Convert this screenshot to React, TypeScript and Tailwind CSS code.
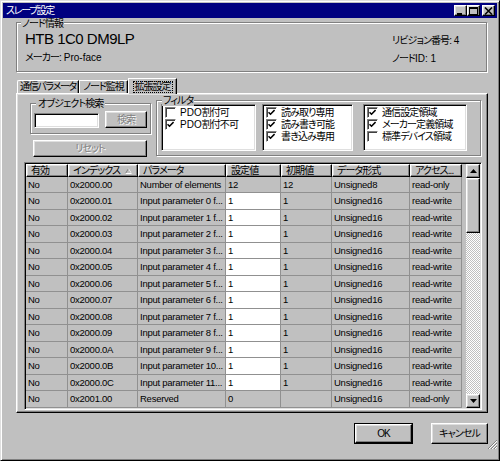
import React from "react";

const FONT = "[font-family:'Liberation_Sans','Noto_Sans_CJK_JP',sans-serif] [font-feature-settings:'palt']";
const JP = "tracking-[-0.9px]";
const RAISED =
  "border border-t-white border-l-white border-r-black border-b-black shadow-[inset_-1px_-1px_0_#808080,inset_1px_1px_0_#dfdfdf]";
const SUNKEN =
  "border border-t-[#808080] border-l-[#808080] border-r-white border-b-white shadow-[inset_1px_1px_0_#000,inset_-1px_-1px_0_#dfdfdf]";
const ETCHED = "border border-[#808080] shadow-[1px_1px_0_#fff,inset_1px_1px_0_#fff]";

function Check({ checked }: { checked: boolean }) {
  return (
    <span className="w-[11px] h-[11px] shrink-0 bg-white border border-t-[#808080] border-l-[#808080] border-r-white border-b-white shadow-[inset_1px_1px_0_#404040] flex items-center justify-center">
      {checked && (
        <svg width="7" height="7" viewBox="0 0 7 7">
          <path d="M0.5 3.2 L2.5 5.2 L6.6 1" fill="none" stroke="#000" strokeWidth="1.6" />
        </svg>
      )}
    </span>
  );
}

function FilterBox({ items, w }: { items: [string, string, boolean][]; w: string }) {
  return (
    <div className={`${SUNKEN} bg-white h-[47px] ${w} flex flex-col pt-[1px] pl-[3px] overflow-hidden`}>
      {items.map(([lat, jp, c]) => (
        <div key={lat + jp} className="flex items-center gap-[4px] h-[12px] text-[10px] leading-[11px] whitespace-nowrap">
          <Check checked={c} />
          <span>
            {lat && <span>{lat}</span>}
            <span className={JP}>{jp}</span>
          </span>
        </div>
      ))}
    </div>
  );
}

const COLS = [42, 70, 88, 55, 51, 78, 52];

type Row = [string, string, string, string, string, string, string, boolean];
const ROWS: Row[] = [
  ["No", "0x2000.00", "Number of elements", "12", "12", "Unsigned8", "read-only", false],
  ["No", "0x2000.01", "Input parameter 0 f...", "1", "1", "Unsigned16", "read-write", true],
  ["No", "0x2000.02", "Input parameter 1 f...", "1", "1", "Unsigned16", "read-write", true],
  ["No", "0x2000.03", "Input parameter 2 f...", "1", "1", "Unsigned16", "read-write", true],
  ["No", "0x2000.04", "Input parameter 3 f...", "1", "1", "Unsigned16", "read-write", true],
  ["No", "0x2000.05", "Input parameter 4 f...", "1", "1", "Unsigned16", "read-write", true],
  ["No", "0x2000.06", "Input parameter 5 f...", "1", "1", "Unsigned16", "read-write", true],
  ["No", "0x2000.07", "Input parameter 6 f...", "1", "1", "Unsigned16", "read-write", true],
  ["No", "0x2000.08", "Input parameter 7 f...", "1", "1", "Unsigned16", "read-write", true],
  ["No", "0x2000.09", "Input parameter 8 f...", "1", "1", "Unsigned16", "read-write", true],
  ["No", "0x2000.0A", "Input parameter 9 f...", "1", "1", "Unsigned16", "read-write", true],
  ["No", "0x2000.0B", "Input parameter 10...", "1", "1", "Unsigned16", "read-write", true],
  ["No", "0x2000.0C", "Input parameter 11...", "1", "1", "Unsigned16", "read-write", true],
  ["No", "0x2001.00", "Reserved", "0", "", "Unsigned16", "read-only", false],
];

const HEADERS = ["有効", "インデックス", "パラメータ", "設定値", "初期値", "データ形式", "アクセス..."];

function ArrowBtn({ up }: { up: boolean }) {
  return (
    <div className={`${RAISED} bg-[#c0c0c0] w-[14px] h-[14px] flex items-center justify-center`}>
      <svg width="7" height="4" viewBox="0 0 7 4">
        {up ? <path d="M3.5 0 L7 4 L0 4 Z" fill="#000" /> : <path d="M0 0 L7 0 L3.5 4 Z" fill="#000" />}
      </svg>
    </div>
  );
}

function Table() {
  return (
    <div className={`${SUNKEN} ml-[6px] mt-[5px] w-[458px] h-[248px] bg-[#c0c0c0] flex p-[1px]`}>
      <div className="flex flex-col w-[440px]">
        <div className="flex h-[13px]">
          {HEADERS.map((h, i) => (
            <div
              key={h}
              style={{ width: COLS[i] }}
              className={`${RAISED} bg-[#c0c0c0] h-[13px] text-[10px] leading-[11px] pl-[4px] flex items-center justify-between pr-[5px] whitespace-nowrap overflow-hidden ${JP}`}
            >
              <span>{h}</span>
              {i === 1 && (
                <svg width="7" height="6" viewBox="0 0 7 6">
                  <path d="M3.5 0.5 L6.5 5.5 L0.5 5.5 Z" fill="none" stroke="#808080" strokeWidth="1" />
                  <path d="M0.5 5.5 L6.5 5.5 L3.5 0.5" fill="none" stroke="#fff" strokeWidth="1" />
                </svg>
              )}
            </div>
          ))}
        </div>
        {ROWS.map((r, ri) => (
          <div key={ri} className={`flex ${ri % 2 === 0 ? "h-[16px]" : "h-[17px]"}`}>
            {COLS.map((w, ci) => (
              <div
                key={ci}
                style={{ width: w }}
                className={`h-full border-r border-b border-[#909090] text-[9.5px] leading-[10px] tracking-[-0.25px] pl-[2px] flex items-center whitespace-nowrap overflow-hidden ${
                  ci === 3 && r[7] ? "bg-white" : "bg-[#c0c0c0]"
                }`}
              >
                {r[ci] as string}
              </div>
            ))}
          </div>
        ))}
      </div>
      <div className="w-[4px]" />
      <div className="w-[14px] flex flex-col">
        <ArrowBtn up />
        <div className={`${RAISED} bg-[#c0c0c0] h-[55px]`} />
        <div className="flex-1 bg-[repeating-conic-gradient(#c0c0c0_0_25%,#ffffff_0_50%)] bg-[length:2px_2px]" />
        <ArrowBtn up={false} />
      </div>
    </div>
  );
}

function Button({ children, disabled, w, isDefault }: { children: React.ReactNode; disabled?: boolean; w: string; isDefault?: boolean }) {
  const inner = (
    <div
      className={`${RAISED} bg-[#c0c0c0] h-full w-full flex items-center justify-center text-[10px] leading-[11px] whitespace-nowrap ${JP} ${
        disabled ? "text-[#808080] [text-shadow:1px_1px_0_#fff]" : "text-black"
      }`}
    >
      {children}
    </div>
  );
  if (isDefault) {
    return <div className={`${w} h-[21px] border border-black`}>{inner}</div>;
  }
  return <div className={`${w}`}>{inner}</div>;
}

function TitleBtn({ kind }: { kind: "min" | "max" | "close" }) {
  return (
    <div className={`${RAISED} bg-[#c0c0c0] w-[13px] h-[11px] flex items-center justify-center`}>
      <svg width="9" height="8" viewBox="0 0 9 8">
        {kind === "min" && <rect x="1" y="6" width="5" height="2" fill="#000" />}
        {kind === "max" && (
          <>
            <rect x="0.5" y="0.5" width="8" height="7" fill="none" stroke="#000" strokeWidth="1" />
            <rect x="0" y="0" width="9" height="2" fill="#000" />
          </>
        )}
        {kind === "close" && <path d="M1 0.5 L8 7.5 M8 0.5 L1 7.5" stroke="#000" strokeWidth="1.5" />}
      </svg>
    </div>
  );
}

const TAB = "h-[13px] border-t border-l border-t-white border-l-white border-r border-r-black shadow-[inset_-1px_0_0_#808080] text-[10px] leading-[10px] flex items-center justify-center whitespace-nowrap tracking-[-1px]";

export default function App() {
  return (
    <div className={`${FONT} w-[500px] h-[461px] bg-[#c0c0c0] border border-t-[#dfdfdf] border-l-[#dfdfdf] border-r-black border-b-black shadow-[inset_1px_1px_0_#fff,inset_-1px_-1px_0_#808080] p-[2px] flex flex-col text-black`}>
      {/* Title bar */}
      <div className="h-[15px] bg-[#000080] flex items-center justify-between pl-[3px] pr-[2px]">
        <span className="text-white text-[10px] leading-[11px] whitespace-nowrap tracking-[-1.3px]">スレーブ設定</span>
        <div className="flex items-center">
          <TitleBtn kind="min" />
          <TitleBtn kind="max" />
          <div className="w-[2px]" />
          <TitleBtn kind="close" />
        </div>
      </div>

      <div className="pl-[13px] flex flex-col">
        {/* Node info group */}
        <div className={`${ETCHED} relative mt-[4px] w-[471px] h-[50px] flex justify-between pl-[8px] pt-[7px]`}>
          <span className={`absolute -top-[4px] left-[4px] bg-[#c0c0c0] px-[1px] text-[10px] leading-[9px] whitespace-nowrap ${JP}`}>ノード情報</span>
          <div className="flex flex-col">
            <span className="text-[15px] leading-[18px] whitespace-nowrap tracking-[-0.5px]">HTB 1C0 DM9LP</span>
            <span className="text-[10px] leading-[12px] mt-[4px] whitespace-nowrap">
              <span className={JP}>メーカー:</span> Pro-face
            </span>
          </div>
          <div className="flex flex-col w-[94px] pt-[5px]">
            <span className="text-[10px] leading-[12px] whitespace-nowrap">
              <span className={JP}>リビジョン番号:</span> 4
            </span>
            <span className="text-[10px] leading-[12px] mt-[6px] whitespace-nowrap">
              <span className={JP}>ノード</span>ID: 1
            </span>
          </div>
        </div>

        {/* Tabs */}
        <div className="flex items-end mt-[6px] h-[15px] pl-[1px]">
          <div className={`${TAB} w-[62px] rounded-tl-[2px] !tracking-[-1.3px]`}>通信パラメータ</div>
          <div className={`${TAB} w-[49px]`}>ノード監視</div>
          <div className={`${TAB} !h-[16px] w-[49px] -mb-[1px] bg-[#c0c0c0] z-10`}>
            <span className="border border-dotted border-black px-[1px] leading-[10px]">拡張設定</span>
          </div>
        </div>

        {/* Tab panel */}
        <div className="w-[472px] h-[320px] border border-t-white border-l-white border-r-black border-b-black shadow-[inset_-1px_-1px_0_#808080,inset_1px_1px_0_#dfdfdf] p-[1px] flex flex-col">
          <div className="flex items-start">
            {/* Left column */}
            <div className="flex flex-col ml-[12px] mt-[8px]">
              <div className={`${ETCHED} relative w-[121px] h-[31px] flex items-start pl-[3px] pt-[8px]`}>
                <span className={`absolute -top-[6px] left-[5px] bg-[#c0c0c0] px-[2px] text-[10px] leading-[11px] whitespace-nowrap ${JP}`}>オブジェクト検索</span>
                <div className={`${SUNKEN} bg-white w-[65px] h-[15px] mt-[1px]`} />
                <div className="ml-[6px] -mt-[1px]">
                  <Button disabled w="w-[42px] h-[17px]">検索</Button>
                </div>
              </div>
              <div className="mt-[6px] ml-[3px]">
                <Button disabled w="w-[114px] h-[17px]">リセット</Button>
              </div>
            </div>

            {/* Filter group */}
            <div className={`${ETCHED} relative ml-[5px] mt-[5px] w-[325px] h-[56px] flex items-start pl-[4px] pt-[3px]`}>
              <span className={`absolute -top-[6px] left-[5px] bg-[#c0c0c0] px-[1px] text-[10px] leading-[11px] whitespace-nowrap ${JP}`}>フィルタ</span>
              <FilterBox w="w-[95px]" items={[["PDO", "割付可", false], ["PDO", "割付不可", true]]} />
              <div className="w-[6px]" />
              <FilterBox w="w-[91px]" items={[["", "読み取り専用", true], ["", "読み書き可能", true], ["", "書き込み専用", true]]} />
              <div className="w-[10px]" />
              <FilterBox w="w-[104px]" items={[["", "通信設定領域", true], ["", "メーカー定義領域", true], ["", "標準デバイス領域", false]]} />
            </div>
          </div>

          <Table />
        </div>

        {/* Bottom buttons */}
        <div className="flex justify-end items-start mt-[10px] w-[482px] h-[27px]">
          <Button isDefault w="w-[59px]">OK</Button>
          <div className="h-[21px] ml-[18px]">
            <Button w="w-[57px] h-[21px]">キャンセル</Button>
          </div>
          <div className="self-end ml-[-1px]">
            <svg width="11" height="11" viewBox="0 0 11 11" className="block">
              <path d="M10 1 L1 10 M10 4 L4 10 M10 7 L7 10" stroke="#808080" strokeWidth="1" />
              <path d="M10 2 L2 10 M10 5 L5 10 M10 8 L8 10" stroke="#fff" strokeWidth="1" />
            </svg>
          </div>
        </div>
      </div>
    </div>
  );
}
